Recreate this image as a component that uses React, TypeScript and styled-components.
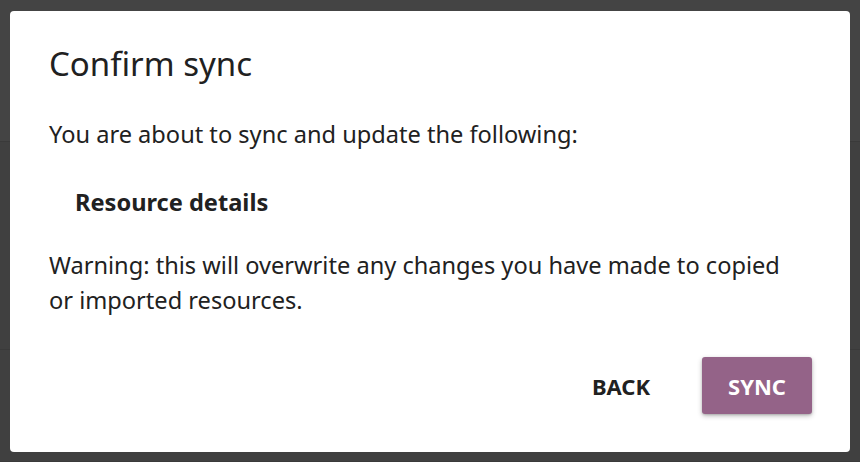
import * as React from "react";
import styled, { createGlobalStyle } from "styled-components";

const GlobalStyle = createGlobalStyle`
  html, body {
    margin: 0;
    padding: 0;
    background: #424242;
    font-family: "Noto Sans", "Open Sans", sans-serif;
  }
`;

const Page = styled.div`
  position: relative;
  width: 860px;
  height: 462px;
  background: #434343;
  overflow: hidden;
`;

const Backdrop = styled.div`
  display: flex;
  flex-direction: column;
  height: 100%;
`;

const BackdropBand = styled.div<{ $h: number; $bg: string }>`
  height: ${(p) => p.$h}px;
  background: ${(p) => p.$bg};
  border-bottom: 1px solid #3a3a3a;
`;

const Overlay = styled.div`
  position: absolute;
  inset: 0;
  display: flex;
  align-items: flex-start;
  justify-content: center;
  padding-top: 11px;
`;

const Dialog = styled.div`
  width: 840px;
  height: 441px;
  box-sizing: border-box;
  background: #ffffff;
  border-radius: 4px;
  padding: 30px 38px 38px 39px;
  display: flex;
  flex-direction: column;
  color: #212121;
`;

const Title = styled.h1`
  margin: 0;
  font-size: 33px;
  font-weight: 400;
  line-height: 46px;
`;

const Body = styled.div`
  flex: 1;
  font-size: 23.6px;
  line-height: 35px;
  padding: 30px 24px 0 0;
`;

const Para = styled.p`
  margin: 0;
`;

const ItemList = styled.ul`
  list-style: none;
  margin: 33px 0 28px;
  padding: 0 0 0 26px;
`;

const Item = styled.li`
  font-weight: 700;
`;

const Actions = styled.div`
  display: flex;
  justify-content: flex-end;
  align-items: center;
  gap: 21px;
`;

const Button = styled.button<{ $primary?: boolean }>`
  font-family: inherit;
  font-size: 22px;
  font-weight: 700;
  text-transform: uppercase;
  height: 57px;
  padding: 0 ${(p) => (p.$primary ? 26 : 31)}px;
  border: none;
  border-radius: 3px;
  cursor: pointer;
  color: ${(p) => (p.$primary ? "#ffffff" : "#212121")};
  background: ${(p) => (p.$primary ? "#946388" : "transparent")};
  box-shadow: ${(p) =>
    p.$primary ? "0 2px 5px rgba(0,0,0,0.25), 0 1px 2px rgba(0,0,0,0.15)" : "none"};
`;

export default function App() {
  return (
    <Page>
      <GlobalStyle />
      <Backdrop>
        <BackdropBand $h={142} $bg="#444444" />
        <BackdropBand $h={207} $bg="#404040" />
        <BackdropBand $h={112} $bg="#404040" />
      </Backdrop>
      <Overlay>
        <Dialog role="dialog" aria-labelledby="sync-title">
          <Title id="sync-title">Confirm sync</Title>
          <Body>
            <Para>You are about to sync and update the following:</Para>
            <ItemList>
              <Item>Resource details</Item>
            </ItemList>
            <Para>
              Warning: this will overwrite any changes you have made to copied
              or imported resources.
            </Para>
          </Body>
          <Actions>
            <Button>Back</Button>
            <Button $primary>Sync</Button>
          </Actions>
        </Dialog>
      </Overlay>
    </Page>
  );
}
